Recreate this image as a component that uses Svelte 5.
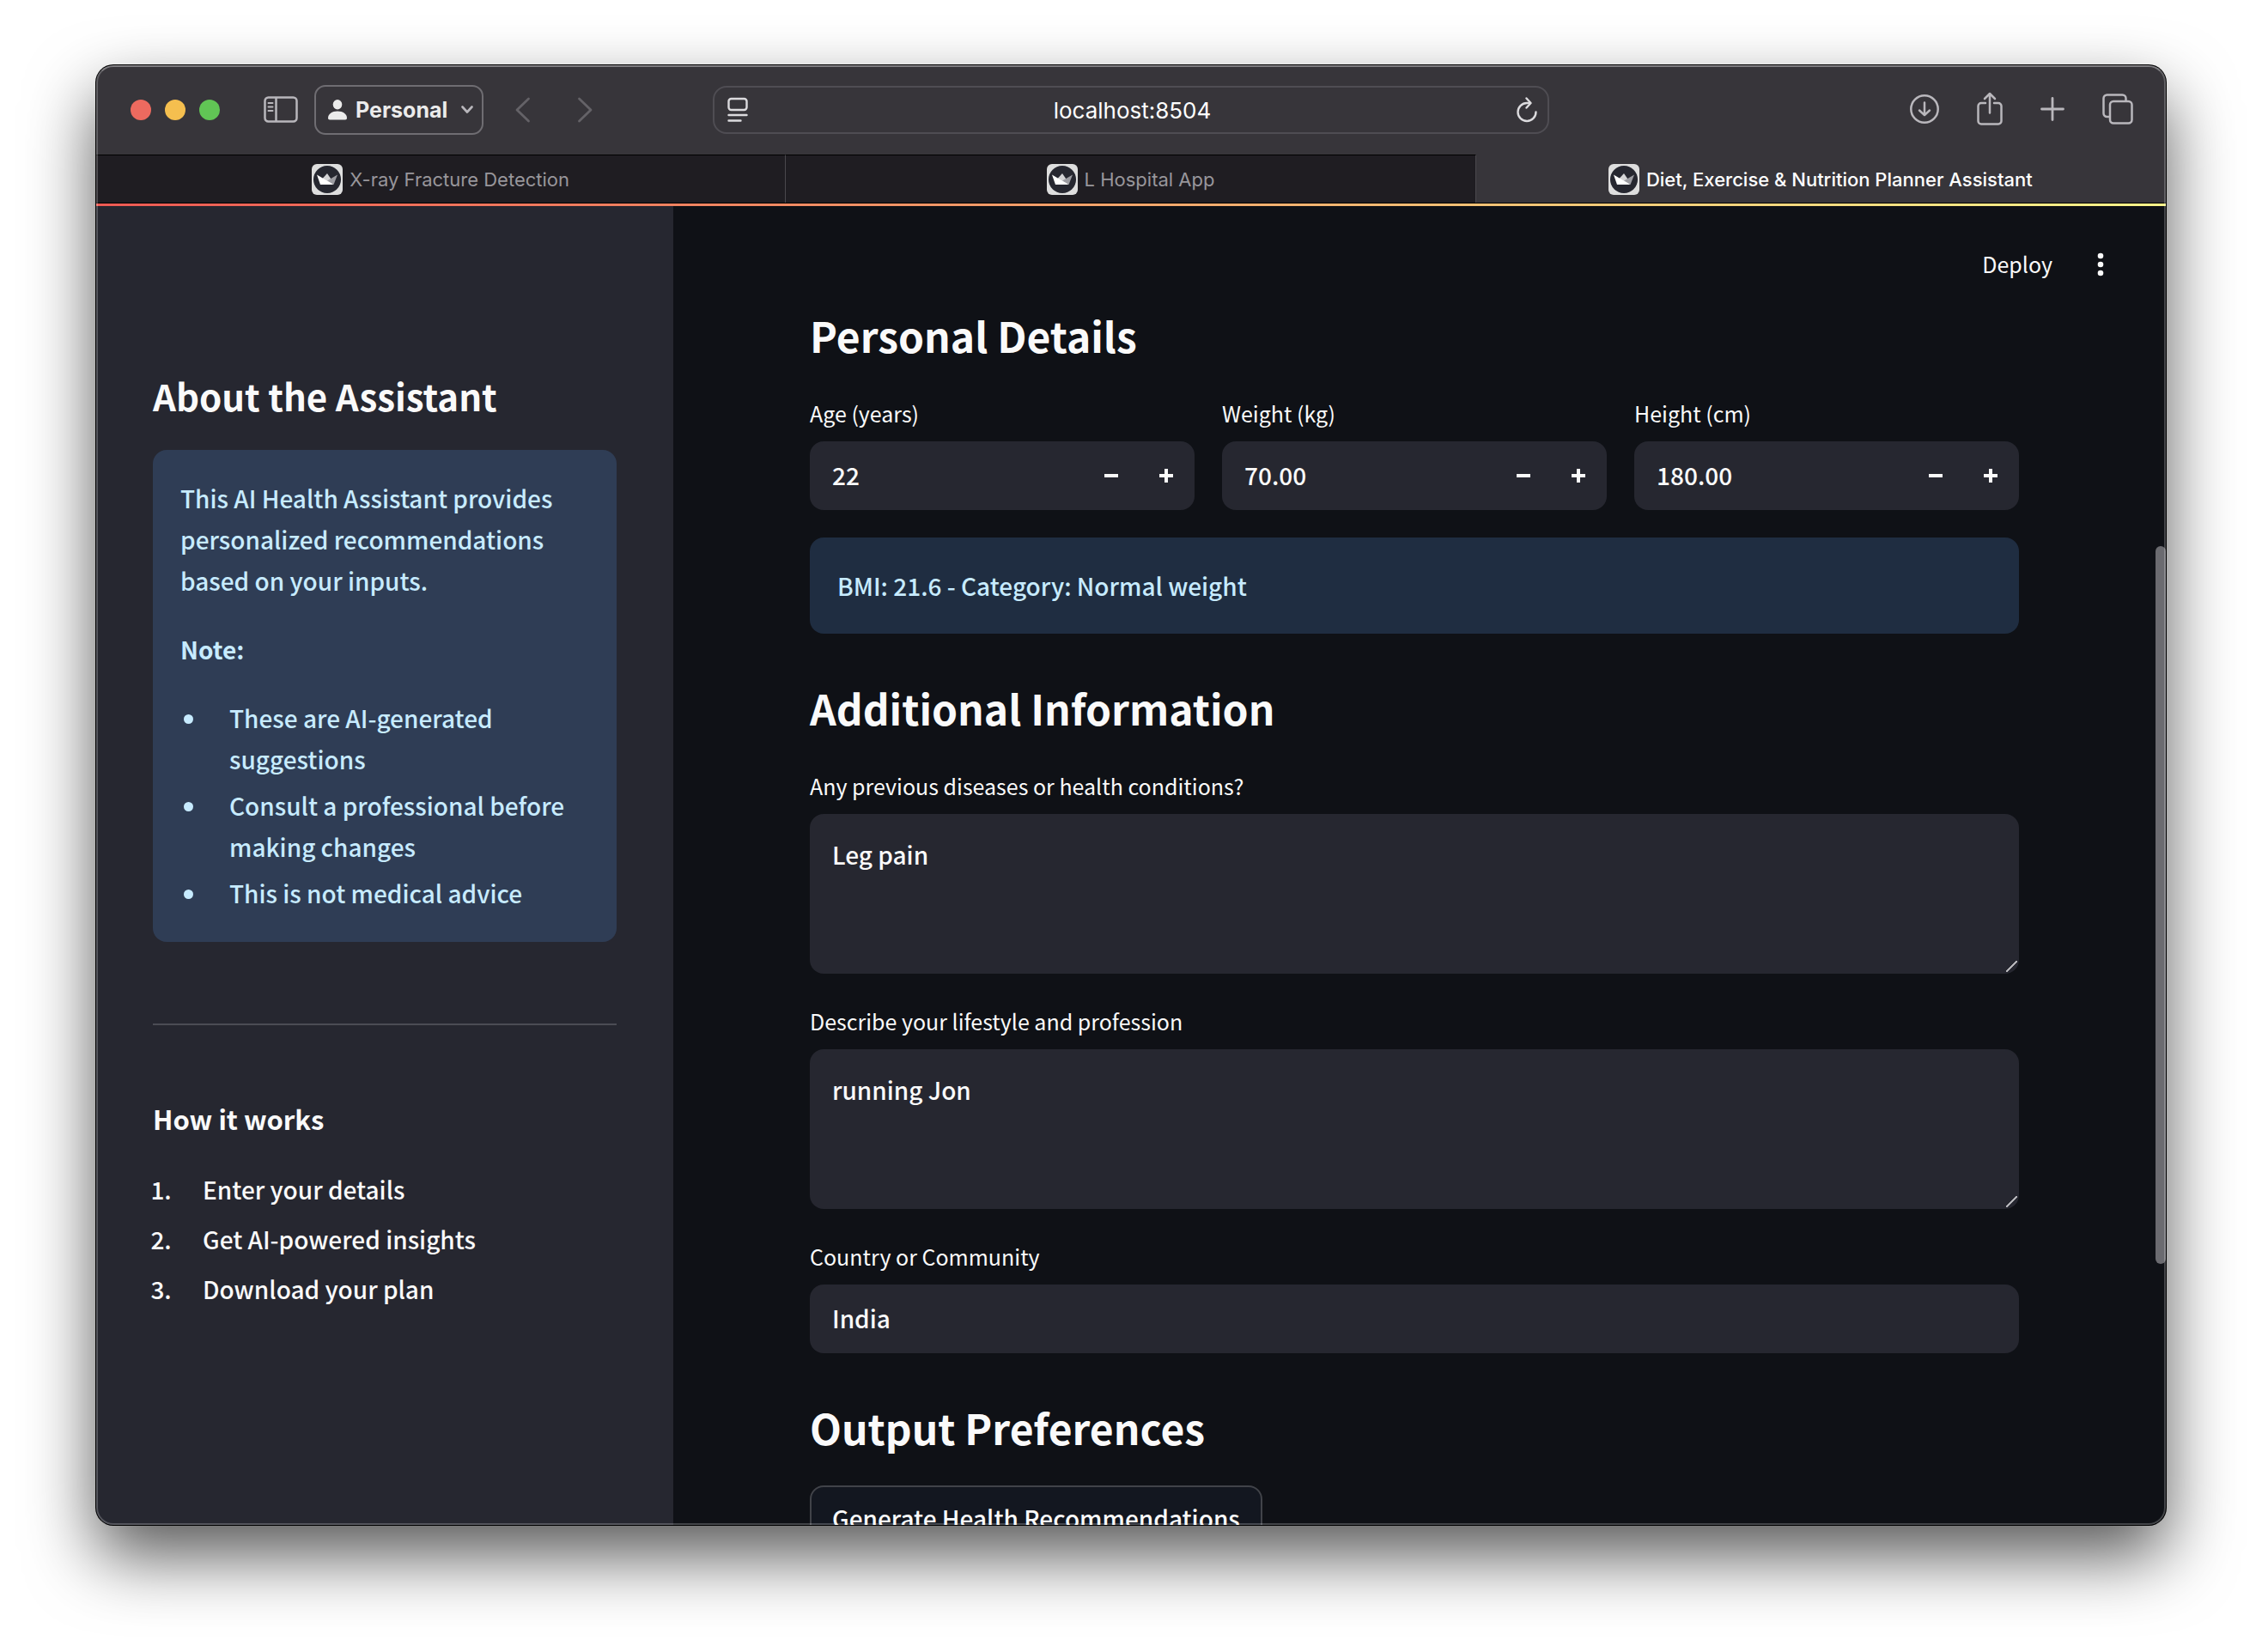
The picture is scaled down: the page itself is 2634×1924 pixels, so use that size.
<script>
  const tabs = [
    { title: 'X-ray Fracture Detection', active: false },
    { title: 'L Hospital App', active: false },
    { title: 'Diet, Exercise & Nutrition Planner Assistant', active: true }
  ];

  const notes = [
    'These are AI-generated suggestions',
    'Consult a professional before making changes',
    'This is not medical advice'
  ];

  const steps = ['Enter your details', 'Get AI-powered insights', 'Download your plan'];

  let measures = $state([
    { id: 'age', label: 'Age (years)', value: '22', digits: 0 },
    { id: 'weight', label: 'Weight (kg)', value: '70.00', digits: 2 },
    { id: 'height', label: 'Height (cm)', value: '180.00', digits: 2 }
  ]);

  let conditions = $state('Leg pain');
  let lifestyle = $state('running Jon');
  let country = $state('India');
  let address = $state('localhost:8504');

  const bmi = $derived(Number(measures[1].value) / (Number(measures[2].value) / 100) ** 2);
  const category = $derived(
    bmi < 18.5 ? 'Underweight' : bmi < 25 ? 'Normal weight' : bmi < 30 ? 'Overweight' : 'Obese'
  );

  function step(measure, amount) {
    measure.value = (Number(measure.value) + amount).toFixed(measure.digits);
  }
</script>

<div class="desktop">
  <div class="window">
    <header class="toolbar">
      <div class="group left">
        <div class="lights">
          <button class="light red" aria-label="Close"></button>
          <button class="light yellow" aria-label="Minimize"></button>
          <button class="light green" aria-label="Zoom"></button>
        </div>
        <button class="icon sidebar-toggle" aria-label="Show sidebar">
          <svg width="40" height="32" viewBox="0 0 40 32" fill="none" stroke="#b9b7bc" stroke-width="2.5">
            <rect x="1.5" y="1.5" width="37" height="28" rx="4" />
            <path d="M14.5 1.5v28" />
            <path d="M5.5 8h5M5.5 12.5h5M5.5 17h5" stroke-width="2" stroke-linecap="round" />
          </svg>
        </button>
        <button class="profile">
          <svg width="22" height="24" viewBox="0 0 22 24" fill="#ebebeb">
            <ellipse cx="11" cy="5.7" rx="5.3" ry="5.7" />
            <path d="M0 21.5C0 17 4.5 13.6 11 13.6S22 17 22 21.5c0 1.3-.8 2-2 2H2c-1.200 0-2-.7-2-2z" />
          </svg>
          <span>Personal</span>
          <svg width="14" height="10" viewBox="0 0 14 10" fill="none" stroke="#b9b7bc" stroke-width="2.600" stroke-linecap="round" stroke-linejoin="round">
            <path d="M1.500 1.500 7 7.500l5.500-6" />
          </svg>
        </button>
        <div class="history">
          <button class="icon" aria-label="Back">
            <svg width="18" height="30" viewBox="0 0 18 30" fill="none" stroke="#646267" stroke-width="2.800" stroke-linecap="round" stroke-linejoin="round">
              <path d="M15.500 2 2 15l13.500 13" />
            </svg>
          </button>
          <button class="icon" aria-label="Forward">
            <svg width="18" height="30" viewBox="0 0 18 30" fill="none" stroke="#646267" stroke-width="2.800" stroke-linecap="round" stroke-linejoin="round">
              <path d="M2.500 2 16 15 2.500 28" />
            </svg>
          </button>
        </div>
      </div>

      <div class="address">
        <button class="icon" aria-label="Page menu">
          <svg width="24" height="30" viewBox="0 0 24 30" fill="none" stroke="#dcdbde" stroke-width="2.400" stroke-linecap="round">
            <rect x="1.500" y="2" width="21" height="13" rx="3" />
            <path d="M1.500 21h21M1.500 27.500h14" />
          </svg>
        </button>
        <input type="text" aria-label="Address" bind:value={address} />
        <button class="icon" aria-label="Reload">
          <svg width="24" height="30" viewBox="0 0 24 30" fill="none" stroke="#dcdbde" stroke-width="2.400" stroke-linecap="round" stroke-linejoin="round">
            <path d="M22.500 17.500A10.500 10.500 0 1 1 12 7h4" />
            <path d="M11.500 1.500l5 5.500-5 5.500" />
          </svg>
        </button>
      </div>

      <div class="group right">
        <button class="icon" aria-label="Downloads">
          <svg width="36" height="36" viewBox="0 0 36 36" fill="none" stroke="#b9b7bc" stroke-width="2.500" stroke-linecap="round" stroke-linejoin="round">
            <circle cx="18" cy="18" r="15.700" />
            <path d="M18 10.500v14.500M12 19.500 18 25.200 24 19.500" />
          </svg>
        </button>
        <button class="icon" aria-label="Share">
          <svg width="30" height="40" viewBox="0 0 30 40" fill="none" stroke="#b9b7bc" stroke-width="2.500" stroke-linecap="round" stroke-linejoin="round">
            <path d="M10 13H5a3.500 3.500 0 0 0-3.500 3.500V34A3.500 3.500 0 0 0 5 37.500h20a3.500 3.500 0 0 0 3.500-3.500V16.500A3.500 3.500 0 0 0 25 13h-5" />
            <path d="M15 24.500V2M9 8l6-6 6 6" />
          </svg>
        </button>
        <button class="icon" aria-label="New tab">
          <svg width="30" height="30" viewBox="0 0 30 30" stroke="#b9b7bc" stroke-width="2.800" stroke-linecap="round">
            <path d="M15 2.500v25M2.500 15h25" />
          </svg>
        </button>
        <button class="icon" aria-label="Tab overview">
          <svg width="36" height="36" viewBox="0 0 36 36" fill="none" stroke="#b9b7bc" stroke-width="2.500" stroke-linejoin="round">
            <path d="M8.500 27H5.500A4 4 0 0 1 1.500 23V5.500a4 4 0 0 1 4-4h18a4 4 0 0 1 4 4V8" />
            <rect x="9" y="9" width="25.500" height="25.500" rx="4" />
          </svg>
        </button>
      </div>
    </header>

    <nav class="tabs" aria-label="Open tabs">
      {#each tabs as tab}
        <button class="tab" class:active={tab.active}>
          <svg width="36" height="36" viewBox="0 0 36 36">
            <rect width="36" height="36" rx="6" fill="#dedede" />
            <circle cx="18" cy="18" r="16" fill="#262730" />
            <path d="M12 17.500 18 11l4.500 6.500L24 24H10z" fill="#d4d4d6" />
            <path d="M30 12.500 25.500 24l-7.500-4.500z" fill="#9c9ca2" />
            <path d="M6 12.500 25.500 24H10z" fill="#fff" />
          </svg>
          <span>{tab.title}</span>
        </button>
      {/each}
    </nav>

    <div class="accent"></div>

    <div class="app">
      <aside class="sidebar">
        <h2>About the Assistant</h2>
        <div class="note">
          <p>This AI Health Assistant provides personalized recommendations based on your inputs.</p>
          <p><strong>Note:</strong></p>
          <ul>
            {#each notes as note}
              <li>{note}</li>
            {/each}
          </ul>
        </div>
        <hr />
        <h3>How it works</h3>
        <ol>
          {#each steps as item}
            <li>{item}</li>
          {/each}
        </ol>
      </aside>

      <main>
        <div class="page">
          <div class="app-bar">
            <button class="deploy">Deploy</button>
            <button class="icon menu" aria-label="Main menu">
              <svg width="8" height="28" viewBox="0 0 8 28" fill="#fafafa">
                <circle cx="4" cy="4" r="3.300" />
                <circle cx="4" cy="14" r="3.300" />
                <circle cx="4" cy="24" r="3.300" />
              </svg>
            </button>
          </div>

          <div class="content">
            <section>
              <h1>Personal Details</h1>
              <div class="measures">
                {#each measures as measure (measure.id)}
                  <div class="field">
                    <label for={measure.id}>{measure.label}</label>
                    <div class="box number">
                      <input id={measure.id} type="text" inputmode="decimal" bind:value={measure.value} />
                      <button aria-label="Decrease {measure.label}" onclick={() => step(measure, -1)}>
                        <svg width="18" height="18" viewBox="0 0 18 18" fill="#fafafa"><rect x="1" y="7" width="16" height="4" /></svg>
                      </button>
                      <button aria-label="Increase {measure.label}" onclick={() => step(measure, 1)}>
                        <svg width="18" height="18" viewBox="0 0 18 18" fill="#fafafa"><path d="M7 1h4v6h6v4h-6v6H7v-6H1V7h6z" /></svg>
                      </button>
                    </div>
                  </div>
                {/each}
              </div>
              <div class="bmi">BMI: {bmi.toFixed(1)} - Category: {category}</div>
            </section>

            <section>
              <h1>Additional Information</h1>
              <div class="fields">
                <div class="field">
                  <label for="conditions">Any previous diseases or health conditions?</label>
                  <textarea id="conditions" class="box" bind:value={conditions}></textarea>
                </div>
                <div class="field">
                  <label for="lifestyle">Describe your lifestyle and profession</label>
                  <textarea id="lifestyle" class="box" bind:value={lifestyle}></textarea>
                </div>
                <div class="field">
                  <label for="country">Country or Community</label>
                  <input id="country" class="box line" type="text" bind:value={country} />
                </div>
              </div>
            </section>

            <section>
              <h1>Output Preferences</h1>
              <button class="generate">Generate Health Recommendations</button>
            </section>
          </div>
        </div>
        <div class="track"><div class="thumb"></div></div>
      </main>
    </div>
  </div>
</div>

<style>
  :global(body) {
    margin: 0;
    background: #fff;
  }

  * {
    box-sizing: border-box;
  }

  button,
  input,
  textarea {
    margin: 0;
    border: 0;
    padding: 0;
    background: none;
    color: inherit;
    font: inherit;
    outline: none;
  }

  svg {
    display: block;
    flex: none;
  }

  h1,
  h2,
  h3,
  p,
  ul,
  ol {
    margin: 0;
    padding: 0;
  }

  .desktop {
    height: 100vh;
    padding: 76px 112px 148px;
    overflow: hidden;
  }

  .window {
    position: relative;
    display: flex;
    flex-direction: column;
    height: 100%;
    border-radius: 20px;
    background: #0f1116;
    box-shadow:
      0 0 0 1px #000,
      0 36px 80px rgba(0, 0, 0, 0.66);
    font-family: Inter, 'Liberation Sans', sans-serif;
    overflow: hidden;
    color-scheme: dark;
  }

  .window::after {
    content: '';
    position: absolute;
    inset: 0;
    border: 2px solid rgba(255, 255, 255, 0.22);
    border-top-color: rgba(255, 255, 255, 0.36);
    border-radius: inherit;
    pointer-events: none;
  }

  .toolbar {
    flex: none;
    display: grid;
    grid-template-columns: 1fr minmax(0, 974px) 1fr;
    align-items: center;
    height: 104px;
    background: #37353a;
  }

  .group {
    display: flex;
    align-items: center;
  }

  .left {
    padding-left: 40px;
  }

  .right {
    justify-content: flex-end;
    gap: 43px;
    padding: 0 38px 2px 0;
  }

  .lights {
    display: flex;
    gap: 16px;
  }

  .light {
    width: 24px;
    height: 24px;
    border-radius: 50%;
  }

  .red {
    background: #ed6a5f;
  }

  .yellow {
    background: #f5bf4f;
  }

  .green {
    background: #61c555;
  }

  .sidebar-toggle {
    margin: 0 19px 0 51px;
  }

  .profile {
    display: flex;
    align-items: center;
    gap: 10px;
    width: 197px;
    height: 58px;
    padding: 0 10px 0 14px;
    border: 2px solid #6f6d72;
    border-radius: 13px;
    color: #ebebeb;
    font-size: 25px;
    font-weight: 700;
  }

  .profile span {
    flex: 1;
    text-align: left;
  }

  .history {
    display: flex;
    gap: 54px;
    margin-left: 37px;
  }

  .address {
    display: flex;
    align-items: center;
    height: 56px;
    padding: 0 12px 0 15px;
    border: 2px solid #4f4d53;
    border-radius: 16px;
  }

  .address input {
    flex: 1;
    min-width: 0;
    color: #fff;
    font-size: 26px;
    text-align: center;
  }

  .tabs {
    flex: none;
    display: grid;
    grid-template-columns: repeat(3, 1fr);
    height: 57px;
    border-bottom: 1px solid #000;
  }

  .tab {
    display: flex;
    align-items: center;
    justify-content: center;
    gap: 8px;
    min-width: 0;
    border-top: 1px solid #000;
    border-right: 1px solid #4a484d;
    background: #1f1d22;
    color: #98969b;
    font-size: 22px;
    white-space: nowrap;
  }

  .tab.active {
    border-color: #37353a;
    background: #37353a;
    color: #fff;
    font-weight: 500;
  }

  .accent {
    flex: none;
    height: 3px;
    background: linear-gradient(90deg, #ee5a54, #f28a63 33%, #f5c777 70%, #fbf58a);
  }

  .app {
    flex: 1;
    min-height: 0;
    display: grid;
    grid-template-columns: 672px minmax(0, 1fr);
    color: #fafafa;
    font-family: 'Noto Sans CJK SC', 'Noto Sans', sans-serif;
    font-size: 28px;
    font-weight: 500;
    line-height: 48px;
  }

  .sidebar {
    padding: 192px 66px 0;
    background: #262730;
    overflow: hidden;
  }

  h2 {
    margin-bottom: 34px;
    font-size: 42px;
    font-weight: 700;
    line-height: 58px;
  }

  .note {
    padding: 32px 32px 33px;
    border-radius: 16px;
    background: #2f3d55;
    color: #c7ebff;
  }

  .note p {
    margin-bottom: 32px;
  }

  .note li {
    margin-left: 32px;
    padding-left: 25px;
  }

  .note li + li {
    margin-top: 6px;
  }

  ol li {
    margin-left: 28px;
    padding-left: 30px;
  }

  ol li + li {
    margin-top: 10px;
  }

  hr {
    height: 2px;
    margin: 95px 0 87px;
    border: 0;
    background: #4b4c54;
  }

  h3 {
    margin-bottom: 36px;
    font-size: 31px;
    font-weight: 700;
    line-height: 44px;
  }

  main {
    display: grid;
    grid-template-columns: minmax(0, 1fr) 12px;
    min-height: 0;
    overflow: hidden;
  }

  .page {
    min-height: 0;
  }

  .app-bar {
    display: flex;
    align-items: center;
    justify-content: flex-end;
    gap: 40px;
    height: 116px;
    padding: 20px 48px 0 0;
  }

  .deploy {
    padding-bottom: 2px;
    font-size: 25px;
    font-weight: 400;
  }

  .menu {
    display: flex;
    justify-content: center;
    width: 32px;
  }

  .content {
    display: flex;
    flex-direction: column;
    gap: 52px;
    max-width: 1408px;
    margin: 0 auto;
  }

  h1 {
    margin-bottom: 36px;
    font-size: 48px;
    font-weight: 700;
    line-height: 68px;
  }

  .measures {
    display: grid;
    grid-template-columns: repeat(3, minmax(0, 1fr));
    gap: 32px;
    margin-bottom: 32px;
  }

  .fields {
    display: grid;
    gap: 34px;
  }

  .field {
    display: grid;
    grid-template-columns: minmax(0, 1fr);
    gap: 12px;
  }

  label {
    font-size: 25px;
    font-weight: 400;
    line-height: 42px;
  }

  .box {
    width: 100%;
    border-radius: 16px;
    background: #262730;
  }

  .number {
    display: flex;
    height: 80px;
    padding-left: 26px;
    padding-right: 1px;
  }

  .number input {
    flex: 1;
    min-width: 0;
    padding-bottom: 2px;
  }

  .number button {
    display: flex;
    align-items: center;
    justify-content: center;
    width: 64px;
  }

  textarea.box {
    display: block;
    height: 186px;
    padding: 24px 26px;
    line-height: 46px;
    resize: vertical;
  }

  textarea::-webkit-resizer {
    background: linear-gradient(135deg, transparent 46%, #b4b4b8 46% 56%, transparent 56%) 0 0 / 13px 13px no-repeat;
  }

  .line {
    height: 80px;
    padding: 0 26px 2px;
  }

  .bmi {
    padding: 32px;
    border-radius: 16px;
    background: #1f2d41;
    color: #c7ebff;
  }

  .generate {
    display: block;
    height: 80px;
    margin-top: -2px;
    padding: 0 24px 4px;
    border: 2px solid #414349;
    border-radius: 16px;
    background: #131720;
  }

  .track {
    padding-top: 396px;
  }

  .thumb {
    height: 836px;
    border-radius: 6px;
    background: #6b6b70;
  }
</style>
